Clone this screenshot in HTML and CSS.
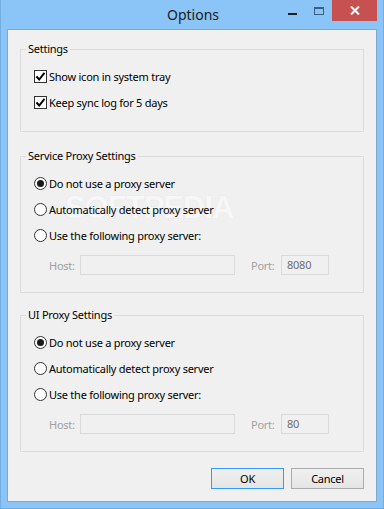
FILE: index.html
```html
<!DOCTYPE html>
<html lang="en">

<head>
    <meta charset="UTF-8">
    <title>Options</title>
    <link rel="stylesheet" href="styles.css">
</head>

<body>
    <div class="window">
        <div class="titlebar">
            <div></div>
            <div class="title">Options</div>
            <div class="controls">
                <div class="ctl ctl-min"><span class="min-bar"></span></div>
                <div class="ctl ctl-max"><span class="max-box"></span></div>
                <div class="ctl ctl-close">
                    <svg width="10" height="9" viewBox="0 0 10 9">
                        <path d="M1 0.5 L9 8.5 M9 0.5 L1 8.5" stroke="#fff" stroke-width="2" />
                    </svg>
                </div>
            </div>
        </div>

        <div class="client">
            <div class="watermark">SOFTPEDIA<sup>®</sup></div>

            <fieldset class="group group-settings">
                <legend>Settings</legend>
                <div class="row"><span class="check"><svg width="11" height="11" viewBox="0 0 11 11"><path d="M1.5 5.5 L4.2 8.5 L9.5 1.8" fill="none" stroke="#000" stroke-width="2" /></svg></span>Show icon in system tray</div>
                <div class="row"><span class="check"><svg width="11" height="11" viewBox="0 0 11 11"><path d="M1.5 5.5 L4.2 8.5 L9.5 1.8" fill="none" stroke="#000" stroke-width="2" /></svg></span>Keep sync log for 5 days</div>
            </fieldset>

            <fieldset class="group group-proxy">
                <legend>Service Proxy Settings</legend>
                <div class="row"><span class="radio on"></span>Do not use a proxy server</div>
                <div class="row"><span class="radio"></span>Automatically detect proxy server</div>
                <div class="row"><span class="radio"></span>Use the following proxy server:</div>
                <div class="host-row">
                    <span class="lbl lbl-host">Host:</span>
                    <span class="field field-host"></span>
                    <span class="lbl lbl-port">Port:</span>
                    <span class="field field-port">8080</span>
                </div>
            </fieldset>

            <fieldset class="group group-proxy group-ui">
                <legend>UI Proxy Settings</legend>
                <div class="row"><span class="radio on"></span>Do not use a proxy server</div>
                <div class="row"><span class="radio"></span>Automatically detect proxy server</div>
                <div class="row"><span class="radio"></span>Use the following proxy server:</div>
                <div class="host-row">
                    <span class="lbl lbl-host">Host:</span>
                    <span class="field field-host"></span>
                    <span class="lbl lbl-port">Port:</span>
                    <span class="field field-port">80</span>
                </div>
            </fieldset>

            <div class="buttons">
                <button class="btn btn-default">OK</button>
                <button class="btn">Cancel</button>
            </div>
        </div>
    </div>
</body>

</html>
```

FILE: styles.css
```css
body {
    margin: 0;
    padding: 0;
    font-family: "Noto Sans", "Open Sans", sans-serif;
    font-size: 11px;
    letter-spacing: -0.25px;
    color: #000;
}

.window {
    width: 384px;
    height: 509px;
    box-sizing: border-box;
    background-color: #8bc4f6;
    border: 1px solid #73aee2;
    border-top: none;
    overflow: hidden;
}

/* title bar */
.titlebar {
    height: 29px;
    display: grid;
    grid-template-columns: 1fr auto 1fr;
}

.title {
    font-size: 14px;
    line-height: 30px;
    color: #1c1c1c;
    padding-left: 2px;
    letter-spacing: 0;
}

.controls {
    display: flex;
    justify-content: flex-end;
    align-items: flex-start;
    padding-right: 6px;
}

.ctl {
    height: 21px;
    display: flex;
    align-items: center;
    justify-content: center;
}

.ctl-min {
    width: 26px;
}

.min-bar {
    width: 9px;
    height: 2px;
    background-color: #1e1e1e;
    margin-top: 6px;
}

.ctl-max {
    width: 27px;
}

.max-box {
    width: 8px;
    height: 5px;
    border: 1px solid #3b5f82;
    border-top-width: 2px;
    margin-top: 1px;
}

.ctl-close {
    width: 45px;
    height: 21px;
    background-color: #c75050;
}

/* client area */
.client {
    position: relative;
    height: 473px;
    box-sizing: border-box;
    margin: 0 6px;
    background-color: #f0f0f0;
    border: 1px solid #7ea8d0;
    padding: 11px 12px 0 12px;
    overflow: hidden;
}

.group {
    position: relative;
    margin: 0;
    padding: 6px 0 0 0;
    border: 1px solid #dcdcdc;
    box-sizing: border-box;
    min-width: 0;
}

.group legend {
    padding: 0 2px;
    margin-left: 5px;
    line-height: 16px;
}

.group-settings {
    height: 91px;
}

.group-proxy {
    height: 145px;
    margin-top: 16px;
}

.group-ui {
    margin-top: 14px;
}

.row {
    height: 26px;
    display: flex;
    align-items: center;
    padding-left: 13px;
}

.check {
    width: 11px;
    height: 11px;
    border: 1px solid #333;
    background-color: #fff;
    margin-right: 2px;
    display: flex;
}

.radio {
    width: 11px;
    height: 11px;
    border: 1px solid #333;
    border-radius: 50%;
    background-color: #fff;
    margin-right: 2px;
    display: flex;
    align-items: center;
    justify-content: center;
}

.radio.on::after {
    content: "";
    width: 7px;
    height: 7px;
    border-radius: 50%;
    background-color: #1a1a1a;
}

.host-row {
    display: flex;
    align-items: center;
    margin-top: 7px;
    padding-left: 28px;
    height: 20px;
}

.lbl {
    color: #a0a0a0;
}

.lbl-host {
    width: 31px;
}

.lbl-port {
    width: 30px;
    margin-left: 16px;
}

.field {
    height: 20px;
    box-sizing: border-box;
    border: 1px solid #dadada;
    background-color: #f0f0f0;
    color: #6d6d6d;
    padding-left: 5px;
    line-height: 18px;
}

.field-host {
    width: 155px;
}

.field-port {
    width: 48px;
}

.buttons {
    display: flex;
    justify-content: flex-end;
    gap: 7px;
    margin-top: 16px;
}

.btn {
    width: 73px;
    height: 21px;
    border: 1px solid #acacac;
    background: linear-gradient(#f0f0f0, #e5e5e5);
    font-family: inherit;
    font-size: 11px;
    letter-spacing: -0.25px;
    padding: 0;
    color: #000;
}

.btn-default {
    border-color: #3399ff;
}

/* faint watermark behind the controls */
.watermark {
    position: absolute;
    left: 57px;
    top: 162px;
    font-family: "Liberation Sans", sans-serif;
    font-weight: bold;
    font-size: 31px;
    line-height: 1;
    letter-spacing: -1px;
    color: #f7f7f7;
    text-shadow: 0 0 2px rgba(0, 0, 0, 0.05);
    pointer-events: none;
}

.watermark sup {
    font-size: 9px;
    font-weight: normal;
    vertical-align: top;
}
```
